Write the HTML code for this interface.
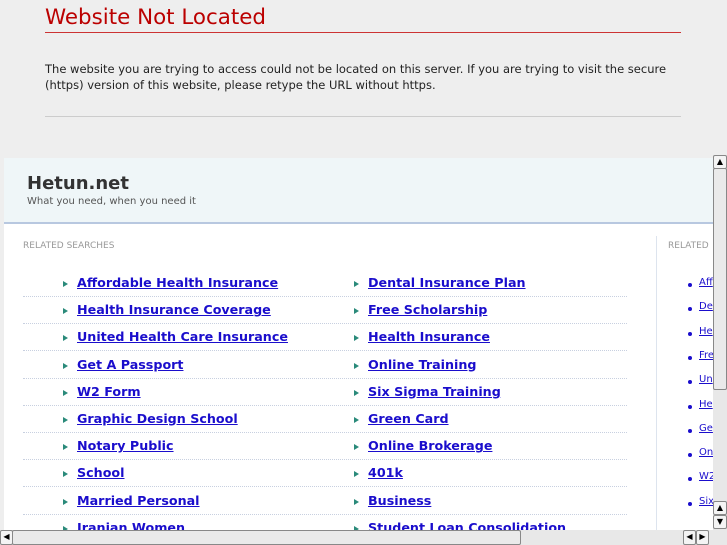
<!DOCTYPE html>
<html><head><style>
body{margin:0;width:727px;height:545px;overflow:hidden;background:#eee;font-family:"DejaVu Sans","Liberation Sans",sans-serif;position:relative}
.h1{position:absolute;left:45px;top:5px;font-size:21.4px;color:#b00;font-family:"DejaVu Sans",sans-serif}
.rl{position:absolute;left:45px;top:32px;width:636px;height:1px;background:#c33}
.msg{position:absolute;left:45px;top:61px;font-size:11.5px;color:#222;line-height:16px;width:660px}
.gl{position:absolute;left:45px;top:116px;width:636px;height:1px;background:#ccc}
.fr{position:absolute;left:4px;top:158px;width:709px;height:372px;background:#fff;overflow:hidden}
.hd{position:absolute;left:0;top:0;width:709px;height:64px;background:#eff6f8;border-bottom:2px solid #b8c8e0}
.t{position:absolute;left:23px;top:15px;font-size:18px;font-weight:bold;color:#333}
.tg{position:absolute;left:23px;top:38px;font-size:10px;color:#555}
.rs{position:absolute;top:83px;font-size:9px;color:#999}
.lk{position:absolute;font-size:12.7px;font-weight:bold;color:#1a0dcc;text-decoration:underline;white-space:nowrap}
.ar{position:absolute;width:0;height:0;border-left:5px solid #2a8a7a;border-top:3px solid transparent;border-bottom:3px solid transparent}
.dl{position:absolute;left:19px;width:604px;border-top:1px dotted #c8d0e0}
.vl{position:absolute;left:652px;top:78px;width:1px;height:300px;background:#dde4ee}
.rk{position:absolute;left:695px;font-size:10px;color:#1a0dcc;text-decoration:underline}
.bu{position:absolute;left:684px;width:4px;height:4px;border-radius:2px;background:#1a0dcc}
.vs{position:absolute;left:713px;top:155px;width:14px;height:375px;background:#e8e8e8}
.hs{position:absolute;left:0;top:530px;width:727px;height:15px;background:#e8e8e8}
.btn{position:absolute;background:#f4f4f4;border:1px solid #888;border-radius:2px;font-size:8px;text-align:center;color:#000;line-height:12px}
</style></head><body>
<div class="h1">Website Not Located</div>
<div class="rl"></div>
<div class="msg">The website you are trying to access could not be located on this server. If you are trying to visit the secure (https) version of this website, please retype the URL without https.</div>
<div class="gl"></div>
<div class="fr">
<div class="hd"><div class="t">Hetun.net</div><div class="tg">What you need, when you need it</div></div>
<div class="rs" style="left:19px">RELATED SEARCHES</div>
<div class="rs" style="left:664px">RELATED</div>
<div class="vl"></div>
<div id="rows"></div>
</div>
<script>
var L=["Affordable Health Insurance","Health Insurance Coverage","United Health Care Insurance","Get A Passport","W2 Form","Graphic Design School","Notary Public","School","Married Personal","Iranian Women"];
var R=["Dental Insurance Plan","Free Scholarship","Health Insurance","Online Training","Six Sigma Training","Green Card","Online Brokerage","401k","Business","Student Loan Consolidation"];
var S=["Aff","De","He","Fre","Un","He","Ge","On","W2","Six"];
var h="";
for(var i=0;i<10;i++){var y=117+i*27.2;
h+='<div class="ar" style="left:59px;top:'+(y+6)+'px"></div><div class="lk" style="left:73px;top:'+y+'px">'+L[i]+'</div>';
h+='<div class="ar" style="left:350px;top:'+(y+6)+'px"></div><div class="lk" style="left:364px;top:'+y+'px">'+R[i]+'</div>';
h+='<div class="dl" style="top:'+(y+21)+'px"></div>';
var y2=119+i*24.3;h+='<div class="bu" style="top:'+(y2+6)+'px"></div><div class="rk" style="top:'+y2+'px">'+S[i]+'</div>';}
document.getElementById("rows").innerHTML=h;
</script>
<div class="vs"></div>
<div class="btn" style="left:713px;top:155px;width:12px;height:12px">▲</div>
<div class="btn" style="left:713px;top:168px;width:12px;height:220px;background:#eaeaea"></div>
<div class="btn" style="left:713px;top:501px;width:12px;height:12px">▲</div>
<div class="btn" style="left:713px;top:515px;width:12px;height:12px">▼</div>
<div class="hs"></div>
<div class="btn" style="left:0;top:530px;width:11px;height:13px">◀</div>
<div class="btn" style="left:12px;top:530px;width:507px;height:13px;background:#eaeaea"></div>
<div class="btn" style="left:683px;top:530px;width:11px;height:13px">◀</div>
<div class="btn" style="left:696px;top:530px;width:11px;height:13px">▶</div>
</body></html>
